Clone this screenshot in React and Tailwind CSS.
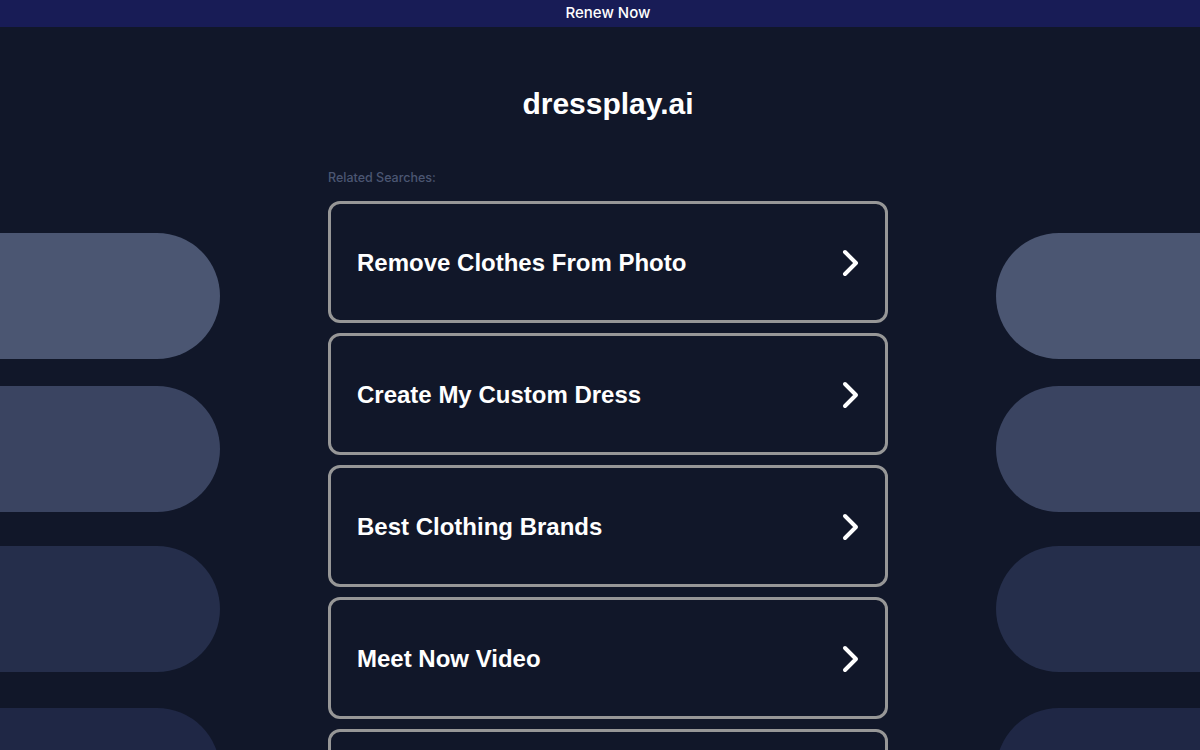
export default function App() {
  const searches = [
    "Remove Clothes From Photo",
    "Create My Custom Dress",
    "Best Clothing Brands",
    "Meet Now Video",
    "Online Fashion Stores",
  ];

  const pills = [
    { color: "bg-[#4b5672]", mt: "mt-[206px]" },
    { color: "bg-[#3a4461]", mt: "mt-[27px]" },
    { color: "bg-[#252e4b]", mt: "mt-[34px]" },
    { color: "bg-[#1f2745]", mt: "mt-[36px]" },
  ];

  return (
    <div className="h-[750px] overflow-hidden bg-[#111729] font-['Liberation_Sans',Arial,sans-serif]">
      {/* Top bar */}
      <div className="flex h-[27px] items-center justify-center bg-[#181c56] pb-[1px] pl-4">
        <span className="font-['Inter',sans-serif] text-[15px] font-medium leading-[18px] text-white">
          Renew Now
        </span>
      </div>

      <div className="flex">
        {/* Left decoration */}
        <div className="flex w-[220px] shrink-0 flex-col">
          {pills.map((p, i) => (
            <div
              key={i}
              className={`${p.mt} h-[126px] w-full shrink-0 rounded-r-full ${p.color}`}
            ></div>
          ))}
        </div>

        {/* Main column */}
        <div className="flex flex-1 flex-col items-center">
          <h1 className="mt-[59px] text-[30px] font-bold leading-[36px] text-white">
            dressplay.ai
          </h1>
          <div className="mt-[48px] w-[560px]">
            <p className="font-['Inter',sans-serif] text-[12.5px] font-medium leading-[16px] text-[#4b5672]">
              Related Searches:
            </p>
            <div className="mt-[15px] flex flex-col gap-[10px]">
              {searches.map((s) => (
                <div
                  key={s}
                  className="flex h-[122px] shrink-0 items-center justify-between rounded-[12px] border-[3px] border-[#979797] pl-[26px] pr-[24px] pt-[2px]"
                >
                  <span className="text-[24px] font-bold leading-[28px] text-white">
                    {s}
                  </span>
                  <svg width="20" height="28" viewBox="0 0 20 28" fill="none">
                    <path
                      d="M4 3 L15 14 L4 25"
                      stroke="white"
                      strokeWidth="4"
                      strokeLinecap="round"
                      strokeLinejoin="round"
                    />
                  </svg>
                </div>
              ))}
            </div>
          </div>
        </div>

        {/* Right decoration */}
        <div className="flex w-[204px] shrink-0 flex-col">
          {pills.map((p, i) => (
            <div
              key={i}
              className={`${p.mt} h-[126px] w-full shrink-0 rounded-l-full ${p.color}`}
            ></div>
          ))}
        </div>
      </div>
    </div>
  );
}
